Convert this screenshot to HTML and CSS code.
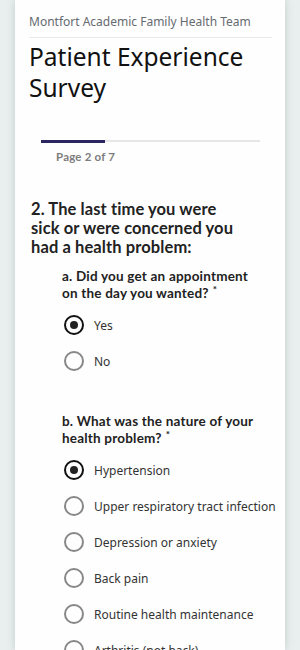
FILE: index.html
```html
<!DOCTYPE html>
<html>
<head>
<meta charset="utf-8">
<link rel="stylesheet" href="styles.css">
</head>
<body>
<div class="page">
  <div class="card">
    <div class="org">Montfort Academic Family Health Team</div>
    <h1 class="title">Patient Experience Survey</h1>
    <div class="progress"><div class="progress-fill" style="width:29%"></div></div>
    <div class="pagenum">Page 2 of 7</div>
    <h2 class="question">2. The last time you were sick or were concerned you had a health problem:</h2>
    <div class="sub">
      <div class="subq">a. Did you get an appointment on the day you wanted?<span class="req">*</span></div>
      <div class="opts">
        <div class="opt"><span class="radio checked"></span><span>Yes</span></div>
        <div class="opt"><span class="radio"></span><span>No</span></div>
      </div>
    </div>
    <div class="sub second">
      <div class="subq">b. What was the nature of your health problem?<span class="req">*</span></div>
      <div class="opts">
        <div class="opt"><span class="radio checked"></span><span>Hypertension</span></div>
        <div class="opt"><span class="radio"></span><span>Upper respiratory tract infection</span></div>
        <div class="opt"><span class="radio"></span><span>Depression or anxiety</span></div>
        <div class="opt"><span class="radio"></span><span>Back pain</span></div>
        <div class="opt"><span class="radio"></span><span>Routine health maintenance</span></div>
        <div class="opt"><span class="radio"></span><span>Arthritis (not back)</span></div>
        <div class="opt"><span class="radio"></span><span>Other</span></div>
      </div>
    </div>
  </div>
</div>
</body>
</html>
```
FILE: styles.css
```css
html, body {
  margin: 0;
  padding: 0;
  background: #e9efee;
  overflow: hidden;
}
.page {
  padding: 0 15px;
  height: 650px;
}
.card {
  background: #fefefe;
  height: 100%;
  box-shadow: 0 0 8px rgba(120, 140, 138, 0.35);
  padding: 12px 13px 0 14px;
  box-sizing: border-box;
  overflow: hidden;
}
.org {
  font-family: "Noto Sans", "Open Sans", sans-serif;
  font-size: 12px;
  color: #666b70;
  line-height: 20px;
  padding-bottom: 5px;
  border-bottom: 1px solid #e8eaec;
}
.title {
  margin: 0;
  font-family: "Noto Sans", "Open Sans", sans-serif;
  font-weight: 400;
  font-size: 24.5px;
  line-height: 31px;
  color: #111;
  padding-top: 3px;
}
.progress {
  margin: 38px 12px 0 12px;
  height: 2px;
  background: #e6e6e6;
}
.progress-fill {
  height: 3px;
  margin-top: -1px;
  background: #2a2660;
}
.pagenum {
  margin: 8px 0 0 27px;
  font-family: Lato, "Open Sans", sans-serif;
  font-weight: 700;
  font-size: 11.5px;
  letter-spacing: 0.2px;
  color: #7d7d7d;
}
.question {
  margin: 37px 32px 0 2px;
  font-family: Lato, "Open Sans", sans-serif;
  font-weight: 700;
  font-size: 16.5px;
  letter-spacing: 0.1px;
  line-height: 19px;
  color: #222;
}
.sub {
  margin: 11px 0 0 33px;
}
.sub.second {
  margin-top: 41px;
}
.subq {
  font-family: Lato, "Open Sans", sans-serif;
  font-weight: 700;
  font-size: 13.5px;
  letter-spacing: 0.2px;
  line-height: 17px;
  color: #222;
  padding-right: 16px;
}
.req {
  font-size: 10px;
  line-height: 0;
  margin-left: 4px;
  position: relative;
  top: -5px;
}
.opts {
  margin-top: 12px;
  display: flex;
  flex-direction: column;
  gap: 14px;
}
.opt {
  display: flex;
  align-items: center;
  gap: 10px;
  height: 22px;
  margin-left: 2px;
  font-family: "Noto Sans", "Open Sans", sans-serif;
  font-size: 12px;
  color: #333;
  white-space: nowrap;
}
.radio {
  width: 16px;
  height: 16px;
  border: 2px solid #888;
  border-radius: 50%;
  box-sizing: content-box;
  flex: none;
  position: relative;
}
.radio.checked {
  border-color: #111;
}
.radio.checked::after {
  content: "";
  position: absolute;
  left: 4px;
  top: 4px;
  width: 8px;
  height: 8px;
  border-radius: 50%;
  background: #222;
}
```
